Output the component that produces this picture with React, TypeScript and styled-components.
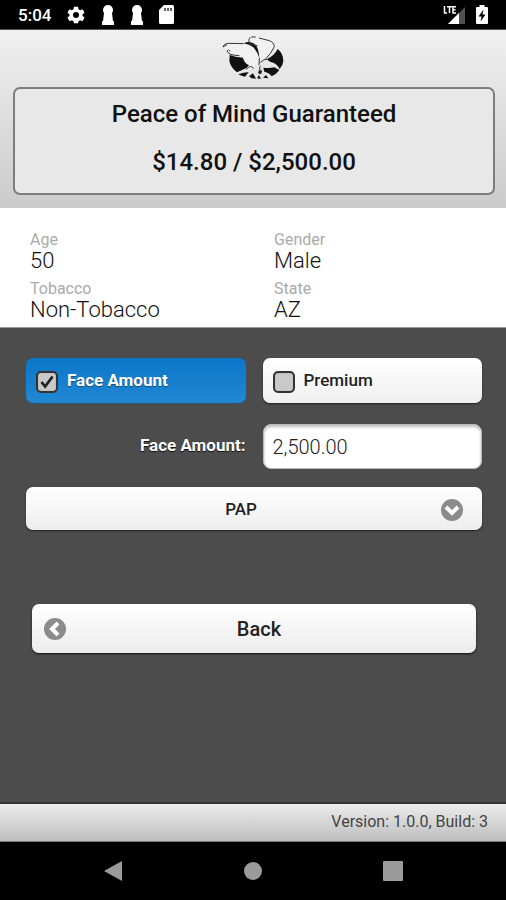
import React, { useState } from "react";
import styled, { createGlobalStyle } from "styled-components";

const GlobalStyle = createGlobalStyle`
  *, *::before, *::after { box-sizing: border-box; }
  body { margin: 0; background: #000; font-family: Roboto, "Liberation Sans", sans-serif; color: #222; }
  button, input, select { font-family: inherit; }
`;

const Screen = styled.div`
  min-height: 100vh;
  display: flex;
  flex-direction: column;
`;

const StatusBar = styled.div`
  display: flex;
  justify-content: space-between;
  align-items: center;
  height: 30px;
  padding: 0 18px;
  background: #000;
  border-bottom: 1px solid #555;
  color: #fff;
`;

const StatusGroup = styled.div<{ $gap: number }>`
  display: flex;
  align-items: center;
  gap: ${(p) => p.$gap}px;
`;

const Clock = styled.span`
  font-size: 17px;
  font-weight: 500;
  line-height: 20px;
`;

const Header = styled.header`
  display: flex;
  flex-direction: column;
  align-items: center;
  padding: 4px 11px 13px 13px;
  background: linear-gradient(#f0f0f0, #cbcbcb);
`;

const QuoteBox = styled.section`
  align-self: stretch;
  margin-top: 6px;
  padding: 13px 0 19px;
  border: 2px solid #7d7d7d;
  border-radius: 7px;
  background: #e8e8e8;
  text-align: center;
`;

const QuoteTitle = styled.h1`
  margin: 0;
  font-size: 24px;
  font-weight: 500;
  line-height: 24px;
  color: #111;
`;

const QuoteAmount = styled.p`
  margin: 24px 0 0;
  font-size: 24px;
  font-weight: 500;
  line-height: 24px;
  color: #111;
`;

const Details = styled.dl`
  display: grid;
  grid-template-columns: 1fr 1fr;
  gap: 4px 12px;
  margin: 0;
  padding: 23px 0 2px 30px;
  background: #fff;
  border-bottom: 1px solid #999;
`;

const Term = styled.dt`
  font-size: 16px;
  line-height: 18px;
  color: #aaa;
`;

const Value = styled.dd`
  margin: 0;
  padding-bottom: 3px;
  font-size: 22px;
  font-weight: 300;
  line-height: 24px;
  color: #111;
`;

const Main = styled.main`
  flex: 1;
  padding: 30px 24px 30px 26px;
  background: #4c4c4d;
`;

const Form = styled.form`
  display: grid;
  grid-template-columns: 1fr 1fr;
  column-gap: 17px;
`;

const Choice = styled.label<{ $on: boolean }>`
  display: flex;
  align-items: center;
  gap: 9px;
  height: 45px;
  padding: 0 10px;
  border-radius: 7px;
  font-size: 17px;
  line-height: 20px;
  font-weight: ${(p) => (p.$on ? 700 : 500)};
  color: ${(p) => (p.$on ? "#fff" : "#222")};
  background: ${(p) => (p.$on ? "linear-gradient(#0b77c8, #2187d3)" : "linear-gradient(#fff, #efefef)")};
  box-shadow: 0 1px 2px ${(p) => (p.$on ? "#35506a" : "#222")};
  text-shadow: ${(p) => (p.$on ? "0 1px 1px #145078" : "0 1px 0 #fff")};
`;

const ChoiceText = styled.span`
  padding-bottom: 2px;
`;

const Tick = styled.span`
  position: relative;
  display: flex;
  width: 22px;
  height: 22px;
  margin-top: 2px;
`;

const TickInput = styled.input`
  appearance: none;
  width: 22px;
  height: 22px;
  margin: 0;
  border: 2px solid #333;
  border-radius: 5px;
  background: #c9c9c9;
  box-shadow: inset 0 0 1px #777;
`;

const TickMark = styled.svg`
  position: absolute;
  inset: 0;
  pointer-events: none;
`;

const FieldLabel = styled.label`
  align-self: center;
  text-align: right;
  font-size: 17px;
  font-weight: 700;
  line-height: 20px;
  color: #fff;
  text-shadow: 0 1px 1px #111;
`;

const AmountInput = styled.input`
  width: 100%;
  height: 45px;
  margin: 21px 0 18px;
  padding: 0 9px;
  border: 1px solid #bbb;
  border-radius: 8px;
  background: #fff;
  box-shadow: inset 0 2px 3px #bbb;
  font-size: 20px;
  font-weight: 300;
  color: #222;
`;

const SelectWrap = styled.div`
  position: relative;
  grid-column: 1 / -1;
`;

const ModeSelect = styled.select`
  appearance: none;
  display: block;
  width: 100%;
  height: 43px;
  padding: 0 48px 0 22px;
  border: 0;
  border-radius: 7px;
  background: linear-gradient(#fff, #ededed);
  box-shadow: 0 1px 2px #222;
  font-size: 17px;
  font-weight: 500;
  text-align: center;
  text-align-last: center;
  color: #222;
`;

const SelectIcon = styled.svg`
  position: absolute;
  right: 19px;
  top: 12px;
  pointer-events: none;
`;

const BackButton = styled.button`
  display: grid;
  grid-template-columns: 24px 1fr 14px;
  align-items: center;
  width: calc(100% - 12px);
  height: 49px;
  margin: 74px 6px 0;
  padding: 0 12px;
  border: 0;
  border-radius: 7px;
  background: linear-gradient(#fff, #ececec);
  box-shadow: 0 1px 2px #111;
  font-size: 20px;
  font-weight: 500;
  color: #222;
`;

const Footer = styled.footer`
  height: 40px;
  padding: 0 18px;
  border-top: 2px solid #333;
  border-bottom: 1px solid #777;
  background: linear-gradient(#ececec, #bebebe);
  font-size: 16px;
  line-height: 36px;
  text-align: right;
  color: #444;
`;

const NavBar = styled.nav`
  display: flex;
  justify-content: space-around;
  align-items: center;
  height: 58px;
  padding: 0 43px;
  background: #000;
`;

const NavButton = styled.button`
  display: flex;
  padding: 0;
  border: 0;
  background: none;
`;

const Gear = () => (
  <svg width="20" height="20" viewBox="0 0 24 24" aria-hidden="true">
    <path
      fill="#fff"
      fillRule="evenodd"
      d="M9.500 2h5l.5 3 2 1.200 2.800-1.200 2.500 4.300-2.400 1.900v2l2.400 1.900-2.500 4.300L17 18.200 15 19.400 14.500 22h-5L9 19.400l-2-1.200-2.800 1.200-2.500-4.300 2.400-1.900v-2L1.700 9.300 4.200 5 7 6.200 9 5zM12 8.500a3.600 3.600 0 1 0 0 7.200 3.600 3.600 0 0 0 0-7.200z"
    />
  </svg>
);

const Keyhole = () => (
  <svg width="14" height="20" viewBox="0 0 14 20" aria-hidden="true">
    <circle cx="7" cy="5" r="5" fill="#fff" />
    <path d="M3 8h8l1 8h1v4H1v-4h1z" fill="#fff" />
  </svg>
);

const SdCard = () => (
  <svg width="15" height="19" viewBox="0 0 15 19" aria-hidden="true">
    <path d="M5 0h8.500A1.500 1.500 0 0 1 15 1.500v16a1.500 1.500 0 0 1-1.500 1.500h-12A1.500 1.500 0 0 1 0 17.500V5z" fill="#fff" />
    <path d="M6 3v3M9 3v3M12 3v3" stroke="#222" strokeWidth="1.400" />
  </svg>
);

const Signal = () => (
  <svg width="23" height="20" viewBox="0 0 23 20" aria-hidden="true">
    <path d="M22 2v17H5z" fill="#505050" />
    <path d="M16 8v11H5z" fill="#fff" />
    <path d="M1.500 1v7H4M4 1.800h5M6.500 1.800V8M13 1.800h-3V8h3M10 4.800h2.500" fill="none" stroke="#fff" strokeWidth="1.500" />
  </svg>
);

const Battery = () => (
  <svg width="12" height="19" viewBox="0 0 12 19" aria-hidden="true">
    <path d="M3.500 0h5v2H11a1 1 0 0 1 1 1v15a1 1 0 0 1-1 1H1a1 1 0 0 1-1-1V3a1 1 0 0 1 1-1h2.500z" fill="#fff" />
    <path d="M7.500 4.500L2.500 11.500h3L4.500 16.500l5-7h-3z" fill="#000" />
  </svg>
);

const EagleLogo = () => (
  <svg width="66" height="47" viewBox="36 18 198 141" role="img" aria-label="Eagle logo">
    <path
      d="M121 29Q125 25 142 26L184 37Q198 44 196 58L187 77 149 105 118 128 90 95 62 77 43 55 48 47 104 46z"
      fill="#f1f1f1"
    />
    <path d="M62 81Q78 88 102 89Q105 105 120 112L112 120Q100 126 84 133Q65 119 61 99z" fill="#111" />
    <path d="M206 63Q223 76 223 99Q222 113 212 123Q204 108 193 104Q181 103 174 93Q195 84 206 63z" fill="#111" />
    <path d="M88 139Q107 132 119 133L108 146Q98 145 88 139zM120 145L132 136 141 152 128 151zM144 151l6-10 6 12zM162 149l9-8 7 10z" fill="#111" />
    <path d="M163 119Q181 122 196 118L211 126Q203 138 188 145Q181 134 166 131z" fill="#111" />
    <path d="M150 126l10 2-4 11-9-3z" fill="#222" />
    <path d="M104 46Q120 38 136 47Q150 58 151 91Q146 72 133 58Q121 49 104 46z" fill="#111" />
    <path
      d="M42 57Q44 47 59 46L104 47M42 57L54 50M55 66Q53 77 72 81L91 83M58 65l6 5M151 90L150 111M121 45Q116 34 124 28M127 27l13 0M150 30L181 38Q195 43 196 56L184 77 170 92M120 47Q133 52 145 53M111 124Q128 108 133 122M154 103Q165 92 175 94M154 113Q150 119 153 126"
      fill="none"
      stroke="#333"
      strokeWidth="3"
    />
  </svg>
);

const Disc = ({ d }: { d: string }) => (
  <>
    <circle cx="11" cy="11" r="11" fill="#8b8b8b" />
    <path d={d} fill="none" stroke="#fff" strokeWidth="4" />
  </>
);

const facts = [
  ["Age", "50"],
  ["Gender", "Male"],
  ["Tobacco", "Non-Tobacco"],
  ["State", "AZ"],
];

export default function App() {
  const [mode, setMode] = useState("Face Amount");
  const [amount, setAmount] = useState("2,500.00");

  return (
    <>
      <GlobalStyle />
      <Screen>
        <StatusBar>
          <StatusGroup $gap={15}>
            <Clock>5:04</Clock>
            <Gear />
            <Keyhole />
            <Keyhole />
            <SdCard />
          </StatusGroup>
          <StatusGroup $gap={10}>
            <Signal />
            <Battery />
          </StatusGroup>
        </StatusBar>
        <Header>
          <EagleLogo />
          <QuoteBox>
            <QuoteTitle>Peace of Mind Guaranteed</QuoteTitle>
            <QuoteAmount>$14.80 / $2,500.00</QuoteAmount>
          </QuoteBox>
        </Header>
        <Details>
          {facts.map(([term, value]) => (
            <div key={term}>
              <Term>{term}</Term>
              <Value>{value}</Value>
            </div>
          ))}
        </Details>
        <Main>
          <Form onSubmit={(e) => e.preventDefault()}>
            {["Face Amount", "Premium"].map((name) => (
              <Choice key={name} $on={mode === name}>
                <Tick>
                  <TickInput type="checkbox" checked={mode === name} onChange={() => setMode(name)} />
                  {mode === name && (
                    <TickMark width="22" height="22" viewBox="0 0 24 24" aria-hidden="true">
                      <path d="M6 12l4 5 8-11" fill="none" stroke="#222" strokeWidth="3" />
                    </TickMark>
                  )}
                </Tick>
                <ChoiceText>{name}</ChoiceText>
              </Choice>
            ))}
            <FieldLabel htmlFor="amount">Face Amount:</FieldLabel>
            <AmountInput id="amount" value={amount} onChange={(e) => setAmount(e.target.value)} />
            <SelectWrap>
              <ModeSelect aria-label="Payment mode">
                <option>PAP</option>
              </ModeSelect>
              <SelectIcon width="22" height="22" viewBox="0 0 22 22" aria-hidden="true">
                <Disc d="M5 8l6 6 6-6" />
              </SelectIcon>
            </SelectWrap>
          </Form>
          <BackButton type="button">
            <svg width="22" height="22" viewBox="0 0 22 22" aria-hidden="true">
              <Disc d="M14 5l-6 6 6 6" />
            </svg>
            <span>Back</span>
          </BackButton>
        </Main>
        <Footer>Version: 1.0.0, Build: 3</Footer>
        <NavBar>
          <NavButton aria-label="Back">
            <svg width="20" height="22" viewBox="0 0 20 22">
              <path d="M19 1v20L1 11z" fill="#9b9b9b" />
            </svg>
          </NavButton>
          <NavButton aria-label="Home">
            <svg width="18" height="18" viewBox="0 0 18 18">
              <circle cx="9" cy="9" r="9" fill="#9b9b9b" />
            </svg>
          </NavButton>
          <NavButton aria-label="Recent apps">
            <svg width="20" height="20" viewBox="0 0 20 20">
              <rect width="20" height="20" rx="1" fill="#9b9b9b" />
            </svg>
          </NavButton>
        </NavBar>
      </Screen>
    </>
  );
}
